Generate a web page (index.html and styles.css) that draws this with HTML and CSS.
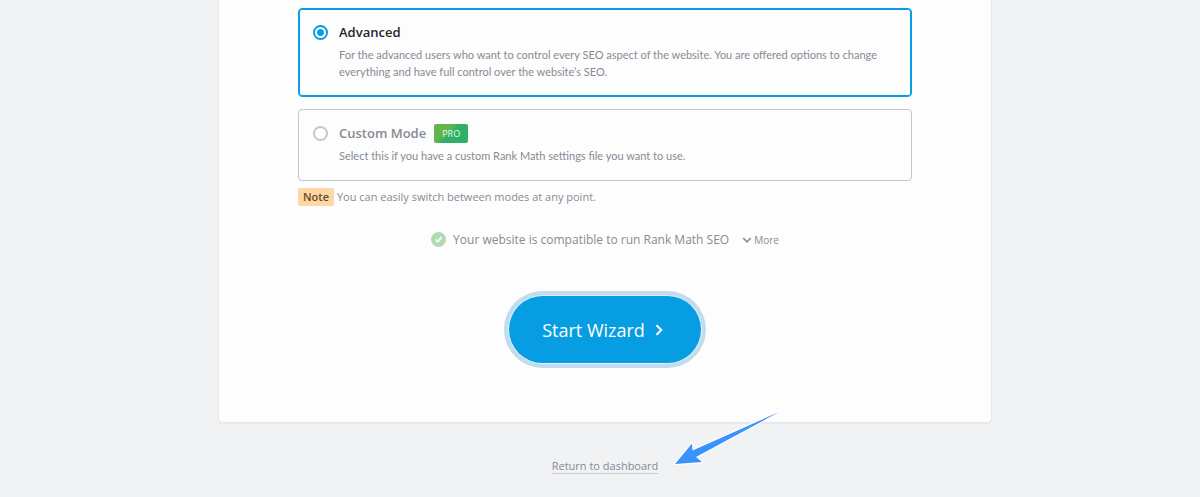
FILE: index.html
```html
<!DOCTYPE html>
<html lang="en">

<head>
    <meta charset="UTF-8">
    <meta name="viewport" content="width=device-width, initial-scale=1.0">
    <title>Setup Wizard - Rank Math SEO</title>
    <link rel="stylesheet" href="styles.css">
</head>

<body>
    <main class="wizard">
        <form class="card">
            <div class="mode mode-active">
                <input type="radio" id="mode-advanced" name="mode" value="advanced" checked>
                <div class="mode-text">
                    <label class="mode-title" for="mode-advanced">Advanced</label>
                    <p>For the advanced users who want to control every SEO aspect of the website. You are offered options to change everything and have full control over the website’s SEO.</p>
                </div>
            </div>
            <div class="mode mode-pro">
                <input type="radio" id="mode-custom" name="mode" value="custom">
                <div class="mode-text">
                    <label class="mode-title" for="mode-custom">Custom Mode <span class="pro-badge">PRO</span></label>
                    <p>Select this if you have a custom Rank Math settings file you want to use.</p>
                </div>
            </div>
            <p class="note"><strong>Note</strong> You can easily switch between modes at any point.</p>

            <div class="compatibility">
                <svg class="check" viewBox="0 0 16 16" aria-hidden="true">
                    <circle cx="8" cy="8" r="8" fill="#b0dcb0" />
                    <path d="M5 8.2l2.2 2.1 4-4.8" fill="none" stroke="#fff" stroke-width="1.8" />
                </svg>
                <span>Your website is compatible to run Rank Math SEO</span>
                <button type="button" class="more">
                    <svg viewBox="0 0 10 8" aria-hidden="true">
                        <path d="M1.2 2L5 5.8 8.8 2" fill="none" stroke="currentColor" stroke-width="1.7" />
                    </svg>
                    More
                </button>
            </div>

            <button type="submit" class="start">
                Start Wizard
                <svg viewBox="0 0 8 12" aria-hidden="true">
                    <path d="M1.5 1.2L6.3 6l-4.8 4.8" fill="none" stroke="currentColor" stroke-width="2" />
                </svg>
            </button>
        </form>

        <footer class="footer">
            <a href="#" class="return">Return to dashboard</a>
            <svg class="arrow" viewBox="0 0 108 56" aria-hidden="true">
                <path d="M1 54L18 33.500l.5 7L105 2 22 47l6 5z" fill="#3a92fd" stroke="#fff" stroke-width="2.500" paint-order="stroke" stroke-linejoin="round" />
            </svg>
        </footer>
    </main>
</body>

</html>
```

FILE: styles.css
```css
* {
    box-sizing: border-box;
}

body {
    margin: 0;
    padding-left: 10px;
    background-color: #f0f2f4;
    color: #868b94;
    font-family: "Open Sans", "Noto Sans", sans-serif;
    font-size: 11px;
    line-height: 17px;
}

p {
    margin: 0;
}

button {
    border: none;
    font-family: inherit;
    cursor: pointer;
}

.wizard {
    max-width: 774px;
    margin: 0 auto;
}

.card {
    padding: 8px 79px 59px;
    background-color: #fdfdfd;
    border: 1px solid #e4e6e9;
    border-top: none;
    border-radius: 0 0 5px 5px;
    box-shadow: 0 1px 1px #e6e8ea;
}

.mode {
    display: flex;
    gap: 11px;
    padding: 13px 14px 16px;
    border: 1px solid #c3c6ca;
    border-radius: 4px;
}

.mode-active {
    margin-bottom: 12px;
    border-color: #069de3;
    box-shadow: inset 0 0 0 1px #069de3;
}

.mode input {
    flex: none;
    appearance: none;
    width: 15px;
    height: 15px;
    margin: 3px 0 0;
    border: 2px solid #c3c6ca;
    border-radius: 50%;
    background-color: #fff;
}

.mode input:checked {
    border-color: #069de3;
    background: radial-gradient(circle, #069de3 3px, #fff 4px);
}

.mode-title {
    display: flex;
    align-items: center;
    gap: 8px;
    min-height: 20px;
    margin-bottom: 4px;
    color: #868b94;
    font-size: 13px;
    font-weight: 600;
}

.mode-active .mode-title {
    color: #23282d;
}

.mode-text p {
    font-family: Lato, "Open Sans", sans-serif;
}

.pro-badge {
    padding: 1px 8px;
    border-radius: 2px;
    background: linear-gradient(135deg, #65b54e 35%, #2eb067 50%);
    color: #e6f7e9;
    font-size: 9px;
    font-weight: 400;
}

.note {
    margin-top: 7px;
}

.note strong {
    display: inline-block;
    padding: 0 5px;
    border-radius: 2px;
    background-color: #fdd7a5;
    color: #6b4a20;
    font-weight: 600;
    line-height: 18px;
}

.compatibility {
    display: flex;
    justify-content: center;
    align-items: center;
    margin: 25px 0 48px;
    font-size: 12px;
}

.check {
    width: 15px;
    height: 15px;
    margin-right: 7px;
}

.more {
    display: flex;
    align-items: center;
    gap: 2px;
    margin-left: 13px;
    padding: 0;
    background: none;
    color: #868b94;
    font-size: 10px;
}

.more svg {
    width: 10px;
    height: 8px;
}

.start {
    display: flex;
    align-items: center;
    gap: 10px;
    height: 67px;
    margin: 0 auto;
    padding: 0 38px 0 33px;
    border-radius: 34px;
    background-color: #069de3;
    box-shadow: 0 0 0 1px #def0fa, 0 0 0 5px #c1dded;
    color: #fff;
    font-size: 18px;
}

.start svg {
    width: 8px;
    height: 12px;
}

.footer {
    position: relative;
    padding: 34px 0 20px;
    text-align: center;
}

.return {
    border-bottom: 1px solid #c9ced2;
    color: #868b94;
    text-decoration: none;
}

/* pointer drawn over the card edge and the return link */
.arrow {
    position: absolute;
    top: -13px;
    left: 456px;
    width: 108px;
    height: 56px;
}
```
